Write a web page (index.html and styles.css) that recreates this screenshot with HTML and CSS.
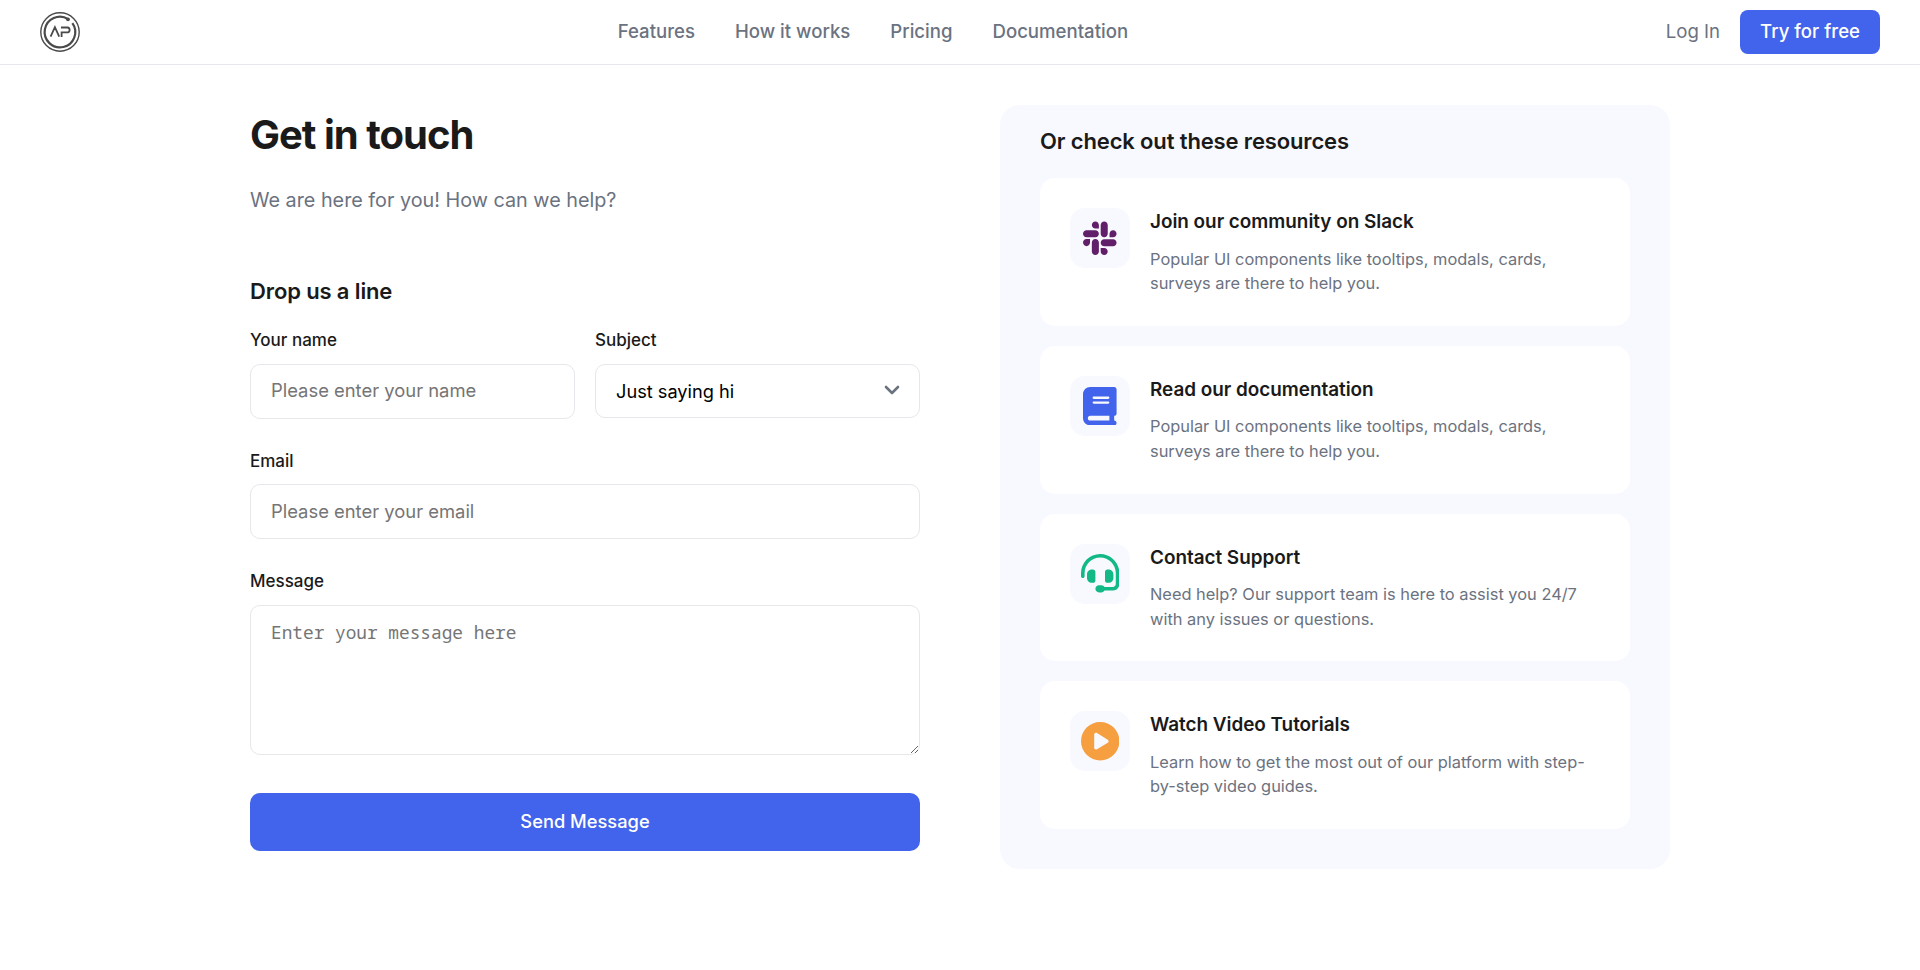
FILE: index.html
```html
<!DOCTYPE html>
<html lang="en">
<head>
<meta charset="utf-8">
<title>Get in touch</title>
<link rel="stylesheet" href="styles.css">
</head>
<body>
<header class="header">
  <a class="logo" href="#" aria-label="Home">
    <svg viewBox="0 0 40 40" width="40" height="40" fill="none" stroke="#4a4a4a">
      <circle cx="20" cy="20" r="19.2" stroke-width="1.4"/>
      <path d="M28.2 7.2A15.3 15.3 0 1 0 32.4 11.2" stroke-width="2.2"/>
      <circle cx="28" cy="7.3" r="1.9" fill="#4a4a4a" stroke="none"/>
      <path d="M10.6 24.6l4.3-9.4 4.3 9.4M21.6 25v-4.7h6.2q1.8-.2 1.8-2.4t-2-2.4h-6.6" stroke-width="1.8"/>
    </svg>
  </a>
  <nav class="nav">
    <a href="#">Features</a>
    <a href="#">How it works</a>
    <a href="#">Pricing</a>
    <a href="#">Documentation</a>
  </nav>
  <div class="actions">
    <a class="login" href="#">Log In</a>
    <a class="try" href="#">Try for free</a>
  </div>
</header>
<main class="contact">
  <section class="form-side">
    <h1>Get in touch</h1>
    <p class="intro">We are here for you! How can we help?</p>
    <h2 class="form-title">Drop us a line</h2>
    <form class="form">
      <div class="row">
        <label class="field"><span>Your name</span><input type="text" placeholder="Please enter your name"></label>
        <label class="field"><span>Subject</span>
          <span class="select">
            <select><option>Just saying hi</option></select>
            <svg class="chevron" viewBox="0 0 16 10" width="16" height="10" fill="none" stroke="#6b7280" stroke-width="2.6" stroke-linecap="round" stroke-linejoin="round"><path d="M2 2l6 6 6-6"/></svg>
          </span>
        </label>
      </div>
      <label class="field"><span>Email</span><input type="email" placeholder="Please enter your email"></label>
      <label class="field"><span>Message</span><textarea placeholder="Enter your message here"></textarea></label>
      <button class="send" type="button">Send Message</button>
    </form>
  </section>
  <aside class="resources">
    <h2>Or check out these resources</h2>
    <div class="cards">
      <article class="card">
        <div class="icon slack"><svg viewBox="0 0 448 512"><path d="M94.12 315.1c0 25.9-21.16 47.06-47.06 47.06S0 341 0 315.1c0-25.9 21.16-47.06 47.06-47.06h47.06v47.06zm23.72 0c0-25.9 21.16-47.06 47.06-47.06s47.06 21.16 47.06 47.06v117.84c0 25.9-21.16 47.06-47.06 47.06s-47.06-21.16-47.06-47.06V315.1zm47.06-188.98c-25.9 0-47.06-21.16-47.06-47.06S139 32 164.9 32s47.06 21.16 47.06 47.06v47.06H164.9zm0 23.72c25.9 0 47.06 21.16 47.06 47.06s-21.16 47.06-47.06 47.06H47.06C21.16 243.96 0 222.8 0 196.9s21.16-47.06 47.06-47.06H164.9zm188.98 47.06c0-25.9 21.16-47.06 47.06-47.06 25.9 0 47.06 21.16 47.06 47.06s-21.16 47.06-47.06 47.06h-47.06V196.9zm-23.72 0c0 25.9-21.16 47.06-47.06 47.06-25.9 0-47.06-21.16-47.06-47.06V79.06c0-25.9 21.16-47.06 47.06-47.06 25.9 0 47.06 21.16 47.06 47.06V196.9zM283.1 385.88c25.9 0 47.06 21.16 47.06 47.06 0 25.9-21.16 47.06-47.06 47.06-25.9 0-47.06-21.16-47.06-47.06v-47.06h47.06zm0-22.62c-25.9 0-47.06-21.16-47.06-47.06 0-25.9 21.16-47.06 47.06-47.06h117.84c25.9 0 47.06 21.16 47.06 47.06 0 25.9-21.16 47.06-47.06 47.06H283.1z"/></svg></div>
        <div class="text"><h3>Join our community on Slack</h3><p>Popular UI components like tooltips, modals, cards, surveys are there to help you.</p></div>
      </article>
      <article class="card">
        <div class="icon book"><svg viewBox="0 0 448 512"><path d="M96 0C43 0 0 43 0 96V416c0 53 43 96 96 96H384h32c17.7 0 32-14.3 32-32s-14.3-32-32-32V384c17.7 0 32-14.3 32-32V32c0-17.7-14.3-32-32-32H384 96zm0 384H352v64H96c-17.7 0-32-14.3-32-32s14.3-32 32-32zm32-240c0-8.8 7.2-16 16-16H336c8.8 0 16 7.2 16 16s-7.2 16-16 16H144c-8.8 0-16-7.2-16-16zm16 48H336c8.8 0 16 7.2 16 16s-7.2 16-16 16H144c-8.8 0-16-7.2-16-16s7.2-16 16-16z"/></svg></div>
        <div class="text"><h3>Read our documentation</h3><p>Popular UI components like tooltips, modals, cards, surveys are there to help you.</p></div>
      </article>
      <article class="card">
        <div class="icon support"><svg viewBox="0 0 512 512"><path d="M256 48C141.1 48 48 141.1 48 256v40c0 13.3-10.7 24-24 24s-24-10.7-24-24V256C0 114.6 114.6 0 256 0S512 114.6 512 256V400.1c0 48.6-39.4 88-88.1 88L313.6 488c-8.3 14.3-23.8 24-41.6 24H240c-26.5 0-48-21.5-48-48s21.5-48 48-48h32c17.8 0 33.3 9.7 41.6 24l110.4 .1c22.1 0 40-17.9 40-40V256c0-114.9-93.1-208-208-208zM144 208h16c17.7 0 32 14.3 32 32V352c0 17.7-14.3 32-32 32H144c-35.3 0-64-28.7-64-64V272c0-35.3 28.7-64 64-64zm224 0c35.3 0 64 28.7 64 64v48c0 35.3-28.7 64-64 64H352c-17.7 0-32-14.3-32-32V240c0-17.7 14.3-32 32-32h16z"/></svg></div>
        <div class="text"><h3>Contact Support</h3><p>Need help? Our support team is here to assist you 24/7 with any issues or questions.</p></div>
      </article>
      <article class="card">
        <div class="icon video"><svg viewBox="0 0 512 512"><path d="M0 256a256 256 0 1 1 512 0A256 256 0 1 1 0 256zM188.3 147.1c-7.6 4.2-12.3 12.3-12.3 20.9V344c0 8.7 4.7 16.7 12.3 20.9s16.8 4.1 24.3-.5l144-88c7.1-4.4 11.5-12.1 11.5-20.5s-4.4-16.1-11.5-20.5l-144-88c-7.4-4.5-16.7-4.7-24.3-.5z" fill-rule="evenodd"/></svg></div>
        <div class="text"><h3>Watch Video Tutorials</h3><p>Learn how to get the most out of our platform with step-by-step video guides.</p></div>
      </article>
    </div>
  </aside>
</main>
</body>
</html>
```
FILE: styles.css
```css
* { box-sizing: border-box; margin: 0; padding: 0; }
body { font-family: Inter, "Liberation Sans", sans-serif; background: #fff; color: #1a1a1a; }
a { text-decoration: none; color: inherit; }

.header { height: 65px; border-bottom: 1px solid #e5e7eb; padding: 0 40px; display: flex; justify-content: space-between; align-items: center; font-size: 18.6px; font-weight: 500; line-height: 24px; color: #6b7280; }
.logo { display: block; height: 40px; }
.nav { display: flex; gap: 40px; padding-bottom: 2px; }
.actions { display: flex; justify-content: flex-end; align-items: center; gap: 20px; }
.login { font-weight: 400; padding-bottom: 2px; }
.try { height: 44px; line-height: 43px; padding: 0 20px; border-radius: 8px; background: #4263eb; color: #fff; }

.contact { width: 1420px; margin: 40px auto 0; display: grid; grid-template-columns: 1fr 1fr; gap: 80px; align-items: start; }
h1 { font-size: 40px; line-height: 60px; font-weight: 700; letter-spacing: -1px; }
.intro { margin-top: 20px; font-size: 19.8px; line-height: 30px; color: #6b7280; }
.form-title { margin-top: 60px; font-size: 22px; line-height: 33px; font-weight: 600; letter-spacing: -0.13px; }
.form { margin-top: 20.4px; display: flex; flex-direction: column; gap: 30px; }
.row { display: grid; grid-template-columns: 1fr 1fr; gap: 20px; }
.field { display: flex; flex-direction: column; gap: 11px; font-size: 17px; line-height: 24.6px; font-weight: 450; }
input, select, textarea { width: 100%; border: 1px solid #e5e7eb; border-radius: 10px; background: #fff; padding: 0 20px; font: 400 18.4px Inter, sans-serif; color: #000; outline: 0; display: block; }
input { height: 54.8px; padding-bottom: 2px; }
::placeholder { color: #757575; }
.select { position: relative; display: block; }
select { height: 54px; appearance: none; font-size: 18.2px; }
.chevron { position: absolute; right: 20px; top: 21.5px; pointer-events: none; }
textarea { height: 150px; padding: 14px 20px; font: 400 17.8px "Noto Sans Mono", "Liberation Mono", monospace; resize: vertical; }
.send { margin-top: 8px; height: 58px; padding-bottom: 2px; border: 0; border-radius: 10px; background: #4263eb; color: #fff; font: 500 18.3px Inter, sans-serif; }

.resources { background: #f8f9ff; border-radius: 20px; padding: 20px 40px 40px; }
.resources h2 { font-size: 22px; line-height: 33px; font-weight: 600; letter-spacing: -0.14px; }
.cards { margin-top: 20px; display: flex; flex-direction: column; gap: 20px; }
.card { display: flex; gap: 20px; height: 147.8px; padding: 30px; background: #fff; border-radius: 15px; }
.icon { flex: none; width: 60px; height: 60px; border-radius: 15px; background: #f8f9ff; display: flex; align-items: center; justify-content: center; }
.icon svg { height: 38.4px; fill: currentColor; }
.slack { color: #611f69; }
.book { color: #4263eb; }
.support { color: #12b886; }
.video { color: #f59f40; }
.text h3 { font-size: 18.9px; line-height: 27px; font-weight: 600; letter-spacing: -0.02px; }
.text p { margin-top: 11.5px; font-size: 16.4px; line-height: 24.6px; color: #6b7280; }
```
